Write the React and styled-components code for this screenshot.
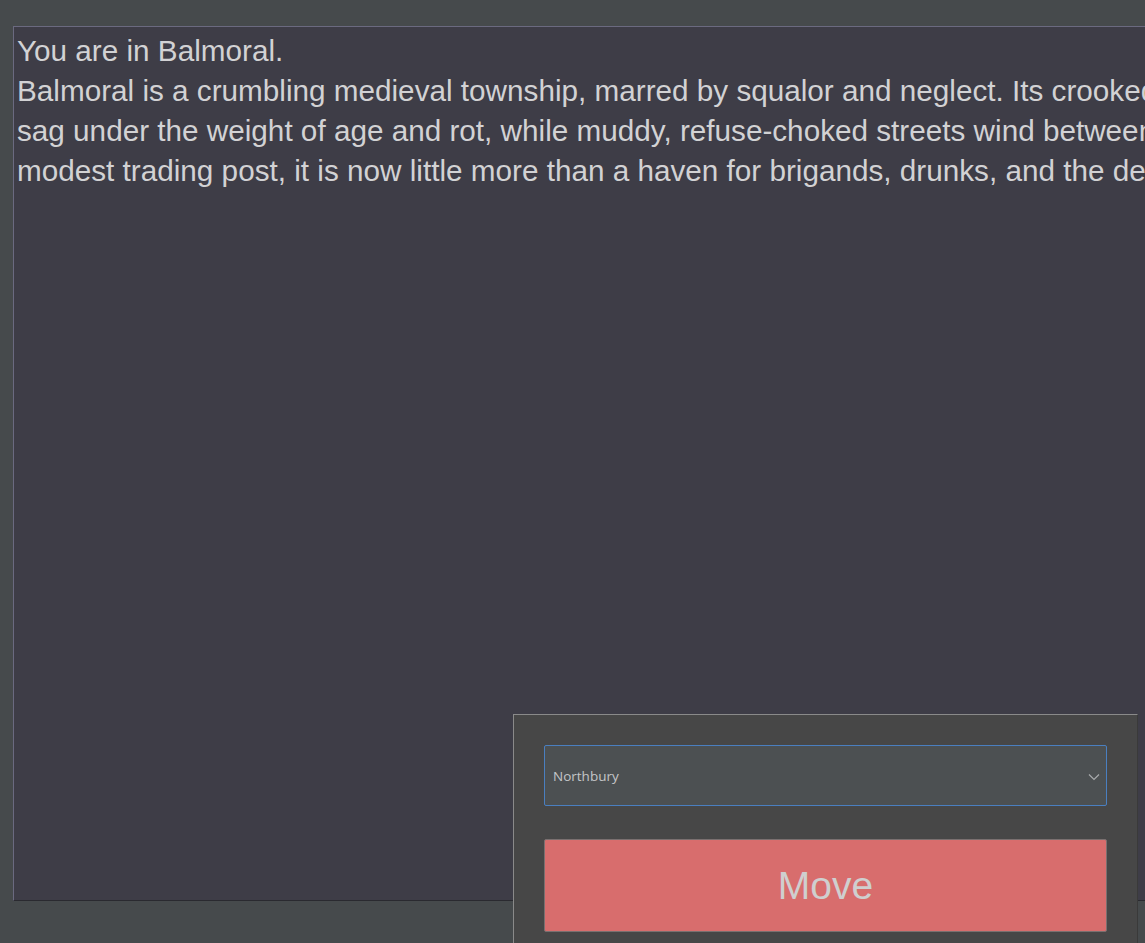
import React from "react";
import styled, { createGlobalStyle } from "styled-components";

const GlobalStyle = createGlobalStyle`
  html, body {
    margin: 0;
    padding: 0;
    background: #464a4c;
    overflow: hidden;
  }
  body {
    font-family: "Liberation Sans", Arial, sans-serif;
  }
`;

const Page = styled.div`
  position: relative;
  width: 1145px;
  height: 943px;
  padding: 26px 0 0 13px;
  box-sizing: border-box;
  overflow: hidden;
`;

const Story = styled.div`
  width: 1400px;
  height: 875px;
  box-sizing: border-box;
  background: #3e3d47;
  border-top: 1px solid #6b6a80;
  border-left: 1px solid #6b6a80;
  border-bottom: 1px solid #2a2a30;
  padding: 4px 0 0 3px;
  color: #d2d2d4;
  font-family: "Liberation Sans", Arial, sans-serif;
  font-size: 29.7px;
  line-height: 40px;
  overflow: hidden;
`;

const Line = styled.div`
  white-space: nowrap;
`;

const Controls = styled.div`
  position: absolute;
  left: 513px;
  top: 714px;
  width: 625px;
  height: 240px;
  box-sizing: border-box;
  background: #474747;
  border-top: 1px solid #8a8a8a;
  border-left: 1px solid #8a8a8a;
  border-right: 1px solid #3a3a3a;
  padding: 30px 30px 0 30px;
  display: flex;
  flex-direction: column;
  gap: 33px;
`;

const Select = styled.div`
  height: 61px;
  box-sizing: border-box;
  background: #4c5052;
  border: 1px solid #4a7fc0;
  border-radius: 2px;
  display: flex;
  align-items: center;
  justify-content: space-between;
  padding: 0 6px 0 8px;
  color: #c4c6c8;
  font-family: "Open Sans", "Noto Sans", sans-serif;
  font-size: 13.5px;
`;

const Chevron = styled.svg`
  width: 12px;
  height: 8px;
  margin-top: 2px;
`;

const MoveButton = styled.button`
  height: 93px;
  box-sizing: border-box;
  background: #d86d6d;
  border: 1px solid #7a7070;
  border-radius: 2px;
  color: #cfcfcf;
  font-family: "Liberation Sans", Arial, sans-serif;
  font-size: 39px;
  padding: 0;
  cursor: pointer;
`;

const App = () => (
    <>
        <GlobalStyle/>
        <Page>
            <Story>
                <Line>You are in Balmoral.</Line>
                <Line>Balmoral is a crumbling medieval township, marred by squalor and neglect. Its crooked timber houses</Line>
                <Line>sag under the weight of age and rot, while muddy, refuse-choked streets wind between them. Once a</Line>
                <Line>modest trading post, it is now little more than a haven for brigands, drunks, and the desperate.</Line>
            </Story>
            <Controls>
                <Select>
                    <span>Northbury</span>
                    <Chevron viewBox="0 0 12 8">
                        <path d="M1 1.5 L6 6.5 L11 1.5" fill="none" stroke="#a8aaac" strokeWidth="1.2"/>
                    </Chevron>
                </Select>
                <MoveButton>Move</MoveButton>
            </Controls>
        </Page>
    </>
);

export default App;
